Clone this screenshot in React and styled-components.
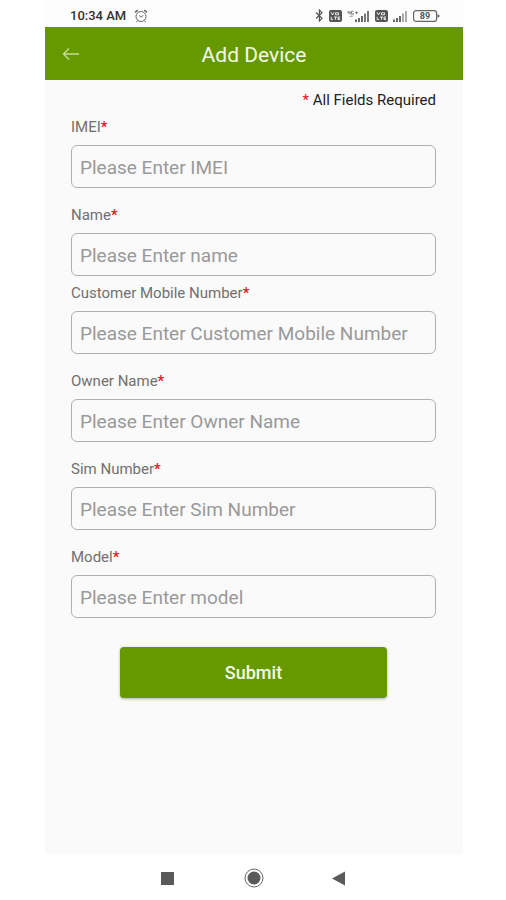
import React from "react";
import styled, { createGlobalStyle } from "styled-components";

const GlobalStyle = createGlobalStyle`
  * {
    box-sizing: border-box;
  }
  body {
    margin: 0;
    background: #fff;
    font-family: Roboto, "Liberation Sans", sans-serif;
  }
`;

const StyledWrapper = styled.div`
  display: flex;
  flex-direction: column;
  min-height: 100vh;
  margin: 0 43px 0 45px;
`;

const StatusBar = styled.div`
  display: flex;
  align-items: center;
  justify-content: space-between;
  height: 27px;
  padding: 4px 23px 0 25px;
  background: #fdfdfd;
  color: #333;
  font-size: 13px;
  font-weight: 500;
`;

const StatusGroup = styled.div`
  display: flex;
  align-items: center;
  gap: ${({ $gap }) => $gap}px;
`;

const Header = styled.header`
  display: grid;
  grid-template-columns: 36px 1fr 36px;
  align-items: center;
  height: 53px;
  padding: 0 8px;
  background: #669900;
`;

const BackButton = styled.button`
  display: flex;
  align-items: center;
  justify-content: center;
  height: 36px;
  padding: 0;
  border: 0;
  background: none;
  color: #c6dc96;
  cursor: pointer;
`;

const Title = styled.h1`
  margin: 0;
  padding-top: 2px;
  color: #f4fae6;
  font-size: 21px;
  font-weight: 400;
  line-height: 28px;
  text-align: center;
`;

const Form = styled.form`
  flex: 1;
  display: flex;
  flex-direction: column;
  padding: 11px 27px 0 26px;
  background: #fafafa;
`;

const Note = styled.p`
  margin: 0 0 9px;
  color: #222;
  font-size: 15px;
  line-height: 18px;
  text-align: right;
`;

const Required = styled.span`
  color: #e8101c;
`;

const Field = styled.div`
  display: flex;
  flex-direction: column;
  gap: 9px;
  margin-bottom: ${({ $tight }) => ($tight ? 8 : 18)}px;
`;

const Label = styled.label`
  color: #707070;
  font-size: 15px;
  line-height: 18px;
  ${Required} {
    font-weight: 500;
  }
`;

const Input = styled.input`
  width: 100%;
  height: 43px;
  padding: 1px 8px 0;
  border: 1px solid #b0b0b0;
  border-radius: 6px;
  background: transparent;
  color: #333;
  font-family: inherit;
  font-size: 19px;
  &::placeholder {
    color: #999;
    opacity: 1;
  }
`;

const SubmitButton = styled.button`
  align-self: center;
  width: 73%;
  height: 51px;
  margin: 11px 0;
  border: 0;
  border-radius: 4px;
  background: #669900;
  box-shadow: 0 1px 3px rgba(0, 0, 0, 0.3);
  color: #f4fae6;
  font-family: inherit;
  font-size: 18px;
  font-weight: 500;
  cursor: pointer;
`;

const NavBar = styled.nav`
  display: flex;
  align-items: center;
  justify-content: center;
  gap: 66px;
  height: 46px;
  padding-top: 2px;
  background: #fff;
`;

const NavButton = styled.button`
  display: flex;
  width: 20px;
  height: 20px;
  padding: 0;
  border: 0;
  background: none;
  cursor: pointer;
`;

const Icon = styled.svg`
  display: block;
  flex: none;
`;

const fields = [
  { id: "imei", label: "IMEI", placeholder: "Please Enter IMEI" },
  { id: "name", label: "Name", placeholder: "Please Enter name", tight: true },
  {
    id: "mobile",
    label: "Customer Mobile Number",
    placeholder: "Please Enter Customer Mobile Number",
  },
  { id: "owner", label: "Owner Name", placeholder: "Please Enter Owner Name" },
  { id: "sim", label: "Sim Number", placeholder: "Please Enter Sim Number" },
  { id: "model", label: "Model", placeholder: "Please Enter model" },
];

const AlarmIcon = () => (
  <Icon width="14" height="14" viewBox="0 0 14 14" fill="none" stroke="#666">
    <circle cx="7" cy="7.5" r="5" />
    <path d="M1 3.4 3.8 1.2M13 3.4 10.2 1.2" strokeWidth="1.6" />
    <path d="M3.4 11.6 2.4 13M10.6 11.6l1 1.4M5 6.3l2 1.9 2.4-1.9" />
  </Icon>
);

const BluetoothIcon = () => (
  <Icon
    width="9"
    height="13"
    viewBox="0 0 9 13"
    fill="none"
    stroke="#555"
    strokeWidth="1.2"
  >
    <path d="M1 3.5 7 9.3 4.4 12V1L7 3.7 1 9.5" />
  </Icon>
);

const VolteIcon = () => (
  <Icon width="13" height="12" viewBox="0 0 13 12">
    <rect width="13" height="12" rx="2" fill="#555" />
    <path
      d="M2 2.3 3.5 5 5 2.3M6.5 2.8h3v2h-3zM2.2 6.8v2.7h2M5 7h3M6.5 7v2.7M11 7H9v2.5h2M9 8.2h2"
      fill="none"
      stroke="#f5f5f5"
      strokeWidth="0.9"
    />
  </Icon>
);

const SignalIcon = ({ network }) => (
  <Icon
    width={network ? 23 : 15}
    height="12"
    viewBox={network ? "-8 0 23 12" : "0 0 15 12"}
  >
    {network && (
      <path
        d="M-7 1v2h2.5M-5 1v3.5M-1.5 1.3h-2v2.8h2V3M0 2.7h3M1.5 1.2v3M-5 7l1.5-1.5M-2 5.5-3.5 7"
        fill="none"
        stroke="#777"
        strokeWidth="0.9"
      />
    )}
    <path d="M0 9.5h2V12H0zM3 8h2v4H3zM6 6h2v6H6z" fill="#666" />
    <path
      d="M9 3.5h2V12H9zM12 1h2v11h-2z"
      fill={network ? "#777" : "#aaa"}
    />
  </Icon>
);

const BatteryIcon = () => (
  <Icon width="27" height="12" viewBox="0 0 27 12">
    <rect
      x="0.6"
      y="0.6"
      width="23"
      height="10.8"
      rx="2.5"
      fill="none"
      stroke="#666"
      strokeWidth="1.2"
    />
    <path d="M24.5 4 27 6l-2.5 2z" fill="#666" />
    <text
      x="12"
      y="9.2"
      fill="#555"
      fontSize="9"
      fontWeight="700"
      textAnchor="middle"
    >
      89
    </text>
  </Icon>
);

function App() {
  return (
    <StyledWrapper>
      <GlobalStyle />
      <StatusBar>
        <StatusGroup $gap={8}>
          <span>10:34 AM</span>
          <AlarmIcon />
        </StatusGroup>
        <StatusGroup $gap={5}>
          <BluetoothIcon />
          <VolteIcon />
          <SignalIcon network />
          <VolteIcon />
          <SignalIcon />
          <BatteryIcon />
        </StatusGroup>
      </StatusBar>
      <Header>
        <BackButton type="button" aria-label="Back">
          <Icon
            width="18"
            height="14"
            viewBox="0 0 18 14"
            fill="none"
            stroke="currentColor"
            strokeWidth="1.3"
          >
            <path d="M17 7H1.5M7 1.5 1.5 7 7 12.5" />
          </Icon>
        </BackButton>
        <Title>Add Device</Title>
      </Header>
      <Form onSubmit={(e) => e.preventDefault()}>
        <Note>
          <Required>*</Required> All Fields Required
        </Note>
        {fields.map(({ id, label, placeholder, tight }) => (
          <Field key={id} $tight={tight}>
            <Label htmlFor={id}>
              {label}
              <Required>*</Required>
            </Label>
            <Input id={id} type="text" placeholder={placeholder} />
          </Field>
        ))}
        <SubmitButton type="submit">Submit</SubmitButton>
      </Form>
      <NavBar>
        <NavButton type="button" aria-label="Recent apps">
          <Icon width="20" height="20" viewBox="0 0 20 20">
            <rect x="3" y="4" width="13" height="13" fill="#5a5a5a" />
          </Icon>
        </NavButton>
        <NavButton type="button" aria-label="Home">
          <Icon width="20" height="20" viewBox="0 0 20 20">
            <circle cx="10" cy="10" r="9" fill="none" stroke="#666" />
            <circle cx="10" cy="10" r="6.5" fill="#5a5a5a" />
          </Icon>
        </NavButton>
        <NavButton type="button" aria-label="Back">
          <Icon width="20" height="20" viewBox="0 0 20 20">
            <path d="M2 10.5 15 3.5v14z" fill="#5a5a5a" />
          </Icon>
        </NavButton>
      </NavBar>
    </StyledWrapper>
  );
}

export default App;
